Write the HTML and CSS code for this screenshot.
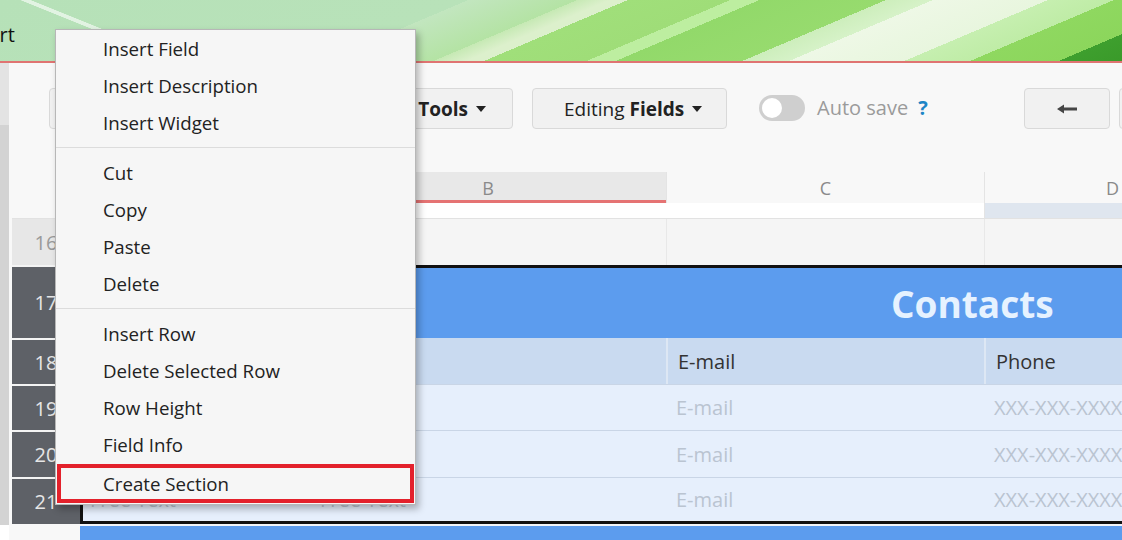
FILE: index.html
```html
<!DOCTYPE html>
<html lang="en">
<head>
<meta charset="utf-8">
<title>Sheet editor</title>
<link rel="stylesheet" href="styles.css">
</head>
<body>
<header class="banner">
  <nav class="nav"><span class="nav-item">Insert</span></nav>
</header>
<div class="app">
  <div class="gutter"></div>
  <main class="workspace">
    <div class="toolbar">
      <button class="btn btn-first">Sheet <svg class="caret" viewBox="0 0 10 6"><path d="M0 0H10L5 6Z"/></svg></button>
      <button class="btn btn-tools">Design&nbsp;<b>Tools</b><svg class="caret" viewBox="0 0 10 6"><path d="M0 0H10L5 6Z"/></svg></button>
      <button class="btn btn-edit">Editing&nbsp;<b>Fields</b><svg class="caret" viewBox="0 0 10 6"><path d="M0 0H10L5 6Z"/></svg></button>
      <span class="toggle"><span class="knob"></span></span>
      <span class="autosave">Auto save</span>
      <span class="help">?</span>
      <button class="btn btn-arrow"><svg class="arrow" viewBox="0 0 20 10"><path d="M0 5L7 0.5V3.5H20V6.5H7V9.5Z"/></svg></button>
      <button class="btn btn-arrow btn-next"><svg class="arrow flip" viewBox="0 0 20 10"><path d="M0 5L7 0.5V3.5H20V6.5H7V9.5Z"/></svg></button>
    </div>
    <div class="sheet">
      <div class="corner"></div>
      <div class="colhead">A</div>
      <div class="colhead selected">B</div>
      <div class="colhead sep">C</div>
      <div class="colhead sep">D</div>

      <div class="corner strip-head"></div>
      <div class="strip"></div>
      <div class="strip"></div>
      <div class="strip"></div>
      <div class="strip frozen"></div>

      <div class="rowhead light">16</div>
      <div class="cell plain"></div>
      <div class="cell plain"></div>
      <div class="cell plain sep"></div>
      <div class="cell plain sep"></div>

      <div class="rowhead dark">17</div>
      <div class="title">Contacts</div>

      <div class="rowhead dark">18</div>
      <div class="cell label edge"></div>
      <div class="cell label"></div>
      <div class="cell label vsep">E-mail</div>
      <div class="cell label vsep">Phone</div>

      <div class="rowhead dark">19</div>
      <div class="cell data edge">Free Text</div>
      <div class="cell data">Free Text</div>
      <div class="cell data">E-mail</div>
      <div class="cell data">XXX-XXX-XXXX</div>

      <div class="rowhead dark">20</div>
      <div class="cell data edge">Free Text</div>
      <div class="cell data">Free Text</div>
      <div class="cell data">E-mail</div>
      <div class="cell data">XXX-XXX-XXXX</div>

      <div class="rowhead dark">21</div>
      <div class="cell data edge last">Free Text</div>
      <div class="cell data last">Free Text</div>
      <div class="cell data last">E-mail</div>
      <div class="cell data last">XXX-XXX-XXXX</div>

      <div class="rowhead blank"></div>
      <div class="next"></div>
    </div>
  </main>
</div>

<div class="menu">
  <div class="item">Insert Field</div>
  <div class="item">Insert Description</div>
  <div class="item">Insert Widget</div>
  <div class="divider"></div>
  <div class="item">Cut</div>
  <div class="item">Copy</div>
  <div class="item">Paste</div>
  <div class="item">Delete</div>
  <div class="divider"></div>
  <div class="item">Insert Row</div>
  <div class="item">Delete Selected Row</div>
  <div class="item">Row Height</div>
  <div class="item">Field Info</div>
  <div class="item highlighted">Create Section</div>
</div>
</body>
</html>
```

FILE: styles.css
```css
* { box-sizing: border-box; }

html, body {
  margin: 0;
  padding: 0;
  width: 1122px;
  height: 540px;
  overflow: hidden;
  background: #f8f8f8;
  font-family: "Open Sans", "Liberation Sans", sans-serif;
  color: #222;
}

.banner {
  height: 63px;
  border-bottom: 2px solid #e07472;
  background:
    linear-gradient(22deg, transparent 13.4%, rgba(255,255,255,0.6) 13.5%, rgba(255,255,255,0.6) 14.2%, transparent 14.3%),
    linear-gradient(157deg,
      #b6e1b8 0%, #b8e2b9 37%,
      #c2e6bf 37%, #b4e3a4 45.6%,
      #c6e9b4 45.6%, #dcf0cc 48.2%, #dcf0cc 49.6%,
      #a0df7a 49.6%, #9fdd78 57.7%,
      #bdeea0 57.7%, #bdeea0 60%,
      #92d96a 60%, #97db6e 70%,
      #cdeebc 70%, #d6f2c8 73.7%,
      #eef8e6 73.7%, #e8f6de 82.8%,
      #c6efb0 82.8%, #bfeca6 88%,
      #8fd860 88%, #8cd65c 95%,
      #3e9f2e 95%, #3a9a2a 100%);
  overflow: hidden;
}

.nav {
  padding-top: 21px;
  line-height: 27px;
}
.nav-item {
  display: inline-block;
  margin-left: -39px;
  font-size: 20px;
  color: #111;
}

.app {
  display: flex;
  height: 477px;
}

.gutter {
  width: 9px;
  flex: none;
  background: linear-gradient(#e3e3e3 0, #e3e3e3 62px, #d3d3d3 62px, #d3d3d3 462px, #fff 462px);
}

.workspace {
  flex: 1;
  min-width: 0;
  overflow: hidden;
  background: #f8f8f8;
}

/* toolbar */
.toolbar {
  height: 109px;
  padding-top: 25px;
  display: flex;
  align-items: flex-start;
  white-space: nowrap;
}

.btn {
  flex: none;
  height: 41px;
  display: inline-flex;
  align-items: center;
  border: 1px solid #d9d9d9;
  border-radius: 4px;
  background: #f1f1f1;
  font-family: "Open Sans", "Liberation Sans", sans-serif;
  font-size: 19px;
  color: #222;
  padding: 0;
}
.btn b { font-weight: 700; }

.caret {
  width: 10px;
  height: 6px;
  margin-left: 8px;
  fill: #222;
}

.btn-first {
  margin-left: 40px;
  width: 259px;
  padding-left: 30px;
}
.btn-tools {
  margin-left: 20px;
  width: 185px;
  justify-content: flex-end;
  padding-right: 26px;
}
.btn-edit {
  margin-left: 19px;
  width: 195px;
  padding-left: 31px;
}

.toggle {
  flex: none;
  margin-left: 32px;
  margin-top: 7px;
  width: 46px;
  height: 26px;
  border-radius: 13px;
  background: #cfcfcf;
  padding: 3px;
}
.knob {
  display: block;
  width: 20px;
  height: 20px;
  border-radius: 50%;
  background: #fff;
}

.autosave {
  flex: none;
  margin-left: 12px;
  margin-top: 6px;
  font-size: 20px;
  line-height: 28px;
  color: #9b9b9b;
}
.help {
  flex: none;
  margin-left: 10px;
  margin-top: 6px;
  font-size: 20px;
  line-height: 28px;
  font-weight: 700;
  color: #1e86c6;
}

.btn-arrow {
  width: 86px;
  justify-content: center;
  margin-left: 96px;
}
.btn-arrow.btn-next { margin-left: 9px; }
.arrow {
  width: 20px;
  height: 10px;
  fill: #454545;
}
.arrow.flip { transform: scaleX(-1); }

/* sheet */
.sheet {
  margin-left: 3px;
  display: grid;
  grid-template-columns: 68px 230px 356px 318px 256px;
  grid-template-rows: 31px 16px 46px 73px 46px 46px 47px 47px 16px;
  width: 1228px;
  font-size: 20px;
}

.corner { background: #f8f8f8; }

.colhead {
  display: flex;
  align-items: center;
  justify-content: center;
  font-size: 18px;
  color: #8a8a8a;
  background: #f8f8f8;
}
.colhead.selected {
  background: #e8e8e8;
  border-bottom: 3px solid #e57373;
  padding-top: 3px;
}
.colhead.sep { border-left: 1px solid #e4e4e4; }

.strip-head { border-bottom: 1px solid #e2e2e2; }
.strip {
  background: #fff;
  border-bottom: 1px solid #e2e2e2;
}
.strip.frozen { background: #dfe6ef; border-left: 1px solid #e4e4e4; }

.rowhead {
  display: flex;
  align-items: center;
  justify-content: center;
  font-size: 20px;
}
.rowhead.light {
  background: #e7e7e7;
  color: #9a9a9a;
}
.rowhead.dark {
  background: #5e6167;
  color: #e6e6e6;
  border-top: 2px solid #f4f4f4;
}
.rowhead.blank { background: #f8f8f8; }

.cell {
  display: flex;
  align-items: center;
  padding-left: 10px;
  white-space: nowrap;
  overflow: hidden;
}
.cell.plain { background: #f5f5f5; }
.cell.plain.sep { border-left: 1px solid #e8e8e8; }

.title {
  grid-column: 2 / -1;
  background: #5c9cee;
  border-top: 3px solid #111;
  border-left: 3px solid #111;
  display: flex;
  align-items: center;
  padding-left: 808px;
  font-size: 37px;
  font-weight: 700;
  color: #e6f2ff;
}

.cell.label {
  background: #c9daf0;
  color: #333;
}
.cell.label.vsep { border-left: 2px solid #dde7f4; padding-left: 10px; }

.cell.data {
  background: #e6effc;
  color: #bac4d1;
  border-top: 1px solid #c9d5e6;
}

.cell.edge {
  border-left: 3px solid #111;
  padding-left: 7px;
}
.cell.last { border-bottom: 3px solid #111; }

.next {
  grid-column: 2 / -1;
  background: #5c9cee;
  border-top: 2px solid #f2f5fa;
}

/* context menu */
.menu {
  position: absolute;
  left: 55px;
  top: 29px;
  width: 361px;
  background: #f6f6f6;
  border: 1px solid #b7b7b7;
  box-shadow: 3px 4px 7px rgba(0, 0, 0, 0.28);
  padding-bottom: 1px;
  font-size: 18.7px;
  color: #222;
}
.item {
  height: 37px;
  line-height: 37px;
  padding-left: 47px;
  white-space: nowrap;
}
.divider {
  height: 1px;
  margin: 6px 0;
  background: #dcdcdc;
}
.item.highlighted {
  height: 39px;
  line-height: 31px;
  margin: 1px 1px 0;
  border: 4px solid #e3212b;
  padding-left: 42px;
}
```
